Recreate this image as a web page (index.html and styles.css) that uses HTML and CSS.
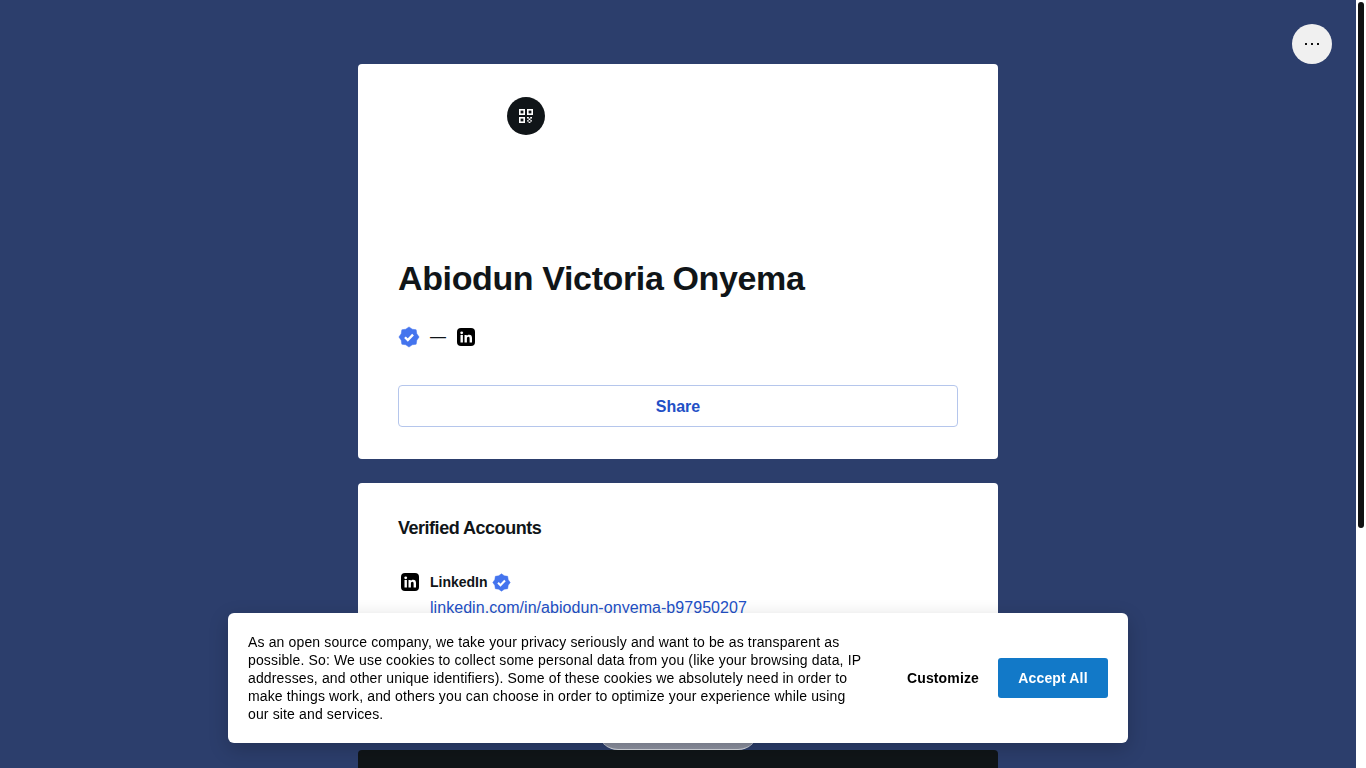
FILE: index.html
```html
<!DOCTYPE html>
<html>
<head>
    <title>Abiodun Victoria Onyema</title>
    <meta charset="UTF-8">
    <meta name="viewport" content="width=device-width, initial-scale=1.0">
    <link rel="stylesheet" href="styles.css">
</head>
<body>

<svg class="icon-defs" width="0" height="0">
    <symbol id="verified" viewBox="0 0 24 24">
        <path fill="#4474ee" stroke="#4474ee" stroke-width="0.600" stroke-linejoin="round" d="M23 12L20.500 15.520 19.800 19.800 15.520 20.500 12 23 8.480 20.500 4.200 19.800 3.500 15.520 1 12 3.500 8.480 4.200 4.200 8.480 3.500 12 1 15.520 3.500 19.800 4.200 20.500 8.480z"/>
        <path fill="none" stroke="#ffffff" stroke-width="2.600" d="M7.600 12.300l3.100 3.100 5.700-6"/>
    </symbol>
    <symbol id="linkedin" viewBox="0 0 18 18">
        <rect width="18" height="18" rx="4" fill="#000000"/>
        <rect x="3.500" y="7" width="2.400" height="7.500" fill="#ffffff"/>
        <circle cx="4.700" cy="4.800" r="1.400" fill="#ffffff"/>
        <path fill="#ffffff" d="M7.500 7h2.300v1.100c.5-.8 1.300-1.300 2.400-1.300 2 0 2.800 1.200 2.800 3.300v4.400h-2.400v-4c0-1-.3-1.700-1.200-1.700-1 0-1.500.7-1.500 1.800v3.900H7.500z"/>
    </symbol>
</svg>

<div class="page">
    <main class="column">
        <section class="card profile">
            <div class="avatar-row">
                <button class="qr-btn" aria-label="QR code">
                    <svg width="16" height="16" viewBox="0 0 16 16" fill="none" stroke="#ffffff" stroke-width="1.600">
                        <rect x="1.800" y="1.800" width="4.400" height="4.400"/>
                        <rect x="9.800" y="1.800" width="4.400" height="4.400"/>
                        <rect x="1.800" y="9.800" width="4.400" height="4.400"/>
                        <path stroke-width="1.400" d="M9 9.700h1.800M12.200 9.700h1.800M10.600 11.300h1.800M9 12.900h1.800M12.200 12.900h1.800M10.600 14.400h1.800"/>
                    </svg>
                </button>
            </div>
            <h1>Abiodun Victoria Onyema</h1>
            <div class="badges">
                <svg class="badge-verified"><use href="#verified"/></svg>
                <span class="dash">—</span>
                <svg class="badge-linkedin"><use href="#linkedin"/></svg>
            </div>
            <button class="share-btn">Share</button>
        </section>

        <section class="card accounts">
            <h2>Verified Accounts</h2>
            <div class="account">
                <svg class="account-icon"><use href="#linkedin"/></svg>
                <div class="account-info">
                    <div class="account-name">LinkedIn <svg class="account-check"><use href="#verified"/></svg></div>
                    <a href="#">linkedin.com/in/abiodun-onyema-b97950207</a>
                </div>
            </div>
            <div class="show-more"></div>
        </section>

        <section class="card-dark"></section>
    </main>
</div>

<button class="menu-btn" aria-label="More">
    <svg width="16" height="4" viewBox="0 0 16 4" fill="#111111">
        <rect x="1" y="1" width="2" height="2"/>
        <rect x="7" y="1" width="2" height="2"/>
        <rect x="13" y="1" width="2" height="2"/>
    </svg>
</button>

<div class="scroll-track"><div class="scroll-thumb"></div></div>

<div class="cookie-banner">
    <p>As an open source company, we take your privacy seriously and want to be as transparent as possible. So: We use cookies to collect some personal data from you (like your browsing data, IP addresses, and other unique identifiers). Some of these cookies we absolutely need in order to make things work, and others you can choose in order to optimize your experience while using our site and services.</p>
    <div class="cookie-actions">
        <button class="customize-btn">Customize</button>
        <button class="accept-btn">Accept All</button>
    </div>
</div>

</body>
</html>
```

FILE: styles.css
```css
/* Global styles */
html, body {
    height: 100%;
    overflow: hidden;
}

body {
    background-color: #2c3e6c;
    color: #101518;
    font-family: "Liberation Sans", Arial, sans-serif;
    margin: 0;
    padding: 0;
}

.icon-defs {
    display: none;
}

.page {
    width: 1356px;
    height: 768px;
    overflow: hidden;
}

.column {
    width: 640px;
    margin: 0 auto;
    padding-top: 64px;
    display: flex;
    flex-direction: column;
}

/* Cards */
.card {
    background-color: #ffffff;
    border-radius: 4px;
    padding: 0 40px;
}

.profile {
    height: 395px;
    margin-bottom: 24px;
}

.avatar-row {
    height: 179px;
    padding: 33px 0 0 109px;
    box-sizing: border-box;
}

.qr-btn {
    width: 38px;
    height: 38px;
    padding: 0;
    border: none;
    border-radius: 50%;
    background-color: #101518;
    display: flex;
    align-items: center;
    justify-content: center;
}

h1 {
    font-size: 34px;
    line-height: 70px;
    letter-spacing: -0.37px;
    font-weight: 700;
    margin: 0;
}

.badges {
    display: flex;
    align-items: center;
    gap: 10px;
    height: 24px;
    margin-top: 12px;
}

.badge-verified {
    width: 22px;
    height: 22px;
}

.badge-linkedin {
    width: 18px;
    height: 18px;
    margin-left: 1px;
}

.dash {
    font-size: 16px;
}

.share-btn {
    display: block;
    width: 100%;
    height: 42px;
    margin-top: 36px;
    padding-top: 2px;
    background-color: #ffffff;
    border: 1px solid #b5c6ec;
    border-radius: 4px;
    color: #2250c6;
    font-family: inherit;
    font-size: 16px;
    font-weight: 700;
}

.accounts {
    position: relative;
    height: 247px;
    margin-bottom: 20px;
}

h2 {
    font-size: 18px;
    line-height: 24px;
    letter-spacing: -0.48px;
    font-weight: 700;
    margin: 0;
    padding-top: 33px;
}

.account {
    display: flex;
    gap: 12px;
    margin-top: 32px;
}

.account-icon {
    width: 18px;
    height: 18px;
    margin: 1px 0 0 3px;
}

.account-info {
    margin-left: -1px;
}

.account-name {
    display: flex;
    align-items: center;
    gap: 4px;
    font-size: 14px;
    font-weight: 700;
    line-height: 20px;
}

.account-check {
    width: 19px;
    height: 19px;
}

.account-info a {
    display: block;
    margin-top: 6px;
    font-size: 16px;
    line-height: 20px;
    letter-spacing: 0.05px;
    color: #2250c6;
    text-decoration: none;
}

.show-more {
    position: absolute;
    left: 240px;
    bottom: -20px;
    width: 160px;
    height: 40px;
    box-sizing: border-box;
    border-bottom: 1px solid #d8dbe2;
    border-radius: 20px;
    background: linear-gradient(to bottom, #70778c, #9297a6);
}

.card-dark {
    height: 300px;
    background-color: #101518;
    border-radius: 4px;
}

/* Top right menu */
.menu-btn {
    position: fixed;
    top: 24px;
    right: 34px;
    width: 40px;
    height: 40px;
    padding: 0;
    border: none;
    border-radius: 50%;
    background-color: #f0f0f0;
    display: flex;
    align-items: center;
    justify-content: center;
}

/* Scrollbar */
.scroll-track {
    position: fixed;
    top: 0;
    right: 0;
    width: 10px;
    height: 768px;
    background-color: #ffffff;
}

.scroll-thumb {
    width: 6px;
    height: 526px;
    margin: 2px 0 0 2px;
    background-color: #111111;
    border-radius: 3px;
}

/* Cookie banner */
.cookie-banner {
    position: fixed;
    left: 228px;
    top: 613px;
    width: 900px;
    height: 130px;
    box-sizing: border-box;
    padding: 20px;
    display: flex;
    align-items: center;
    justify-content: space-between;
    background-color: #ffffff;
    border-radius: 6px;
    box-shadow: 0 6px 20px rgba(0, 0, 0, 0.2);
    color: #000000;
}

.cookie-banner p {
    width: 620px;
    margin: 0;
    font-size: 14px;
    line-height: 18px;
    letter-spacing: 0.14px;
}

.cookie-actions {
    display: flex;
    align-items: center;
    gap: 19px;
}

.customize-btn, .accept-btn {
    font-family: inherit;
    font-size: 14px;
    font-weight: 700;
    letter-spacing: 0.14px;
    border: none;
    border-radius: 3px;
    cursor: pointer;
}

.customize-btn {
    background: none;
    color: #000000;
    padding: 0;
}

.accept-btn {
    width: 110px;
    height: 40px;
    background-color: #1279c8;
    color: #ffffff;
}
```
